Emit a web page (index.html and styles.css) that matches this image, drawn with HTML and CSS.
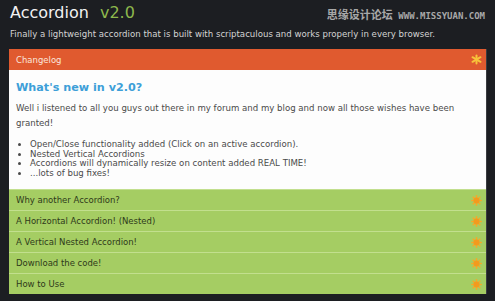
FILE: index.html
```html
<!DOCTYPE html>
<html lang="en">
<head>
  <meta charset="UTF-8" />
  <title>Accordion v2.0</title>
  <link rel="stylesheet" href="styles.css">
</head>
<body>

  <header class="top">
    <div class="title-row">
      <h1>Accordion <span class="version">v2.0</span></h1>
      <div class="watermark">思缘设计论坛 <span class="url">WWW.MISSYUAN.COM</span></div>
    </div>
    <p class="intro">Finally a lightweight accordion that is built with scriptaculous and works properly in every browser.</p>
  </header>

  <div class="accordion">
    <div class="acc-toggle active">
      <span>Changelog</span>
      <svg class="icon" width="11" height="11" viewBox="0 0 11 11">
        <g stroke="#f7c23a" stroke-width="2" stroke-linecap="round">
          <line x1="5.5" y1="1.5" x2="5.5" y2="9.5"/>
          <line x1="1.5" y1="3.2" x2="9.5" y2="7.8"/>
          <line x1="1.5" y1="7.8" x2="9.5" y2="3.2"/>
        </g>
      </svg>
    </div>
    <div class="acc-content">
      <h2>What's new in v2.0?</h2>
      <p>Well i listened to all you guys out there in my forum and my blog and now all those wishes have been granted!</p>
      <ul>
        <li>Open/Close functionality added (Click on an active accordion).</li>
        <li>Nested Vertical Accordions</li>
        <li>Accordions will dynamically resize on content added REAL TIME!</li>
        <li>...lots of bug fixes!</li>
      </ul>
    </div>

    <div class="acc-toggle">
      <span>Why another Accordion?</span>
      <svg class="icon" width="11" height="11" viewBox="0 0 11 11"><use href="#sun"/></svg>
    </div>
    <div class="acc-toggle">
      <span>A Horizontal Accordion! (Nested)</span>
      <svg class="icon" width="11" height="11" viewBox="0 0 11 11"><use href="#sun"/></svg>
    </div>
    <div class="acc-toggle">
      <span>A Vertical Nested Accordion!</span>
      <svg class="icon" width="11" height="11" viewBox="0 0 11 11"><use href="#sun"/></svg>
    </div>
    <div class="acc-toggle">
      <span>Download the code!</span>
      <svg class="icon" width="11" height="11" viewBox="0 0 11 11"><use href="#sun"/></svg>
    </div>
    <div class="acc-toggle">
      <span>How to Use</span>
      <svg class="icon" width="11" height="11" viewBox="0 0 11 11"><use href="#sun"/></svg>
    </div>
  </div>

  <svg width="0" height="0" class="defs">
    <defs>
      <g id="sun">
        <g stroke="#f7a928" stroke-width="1.6" stroke-linecap="round">
          <line x1="5.5" y1="0.8" x2="5.5" y2="10.2"/>
          <line x1="0.8" y1="5.5" x2="10.2" y2="5.5"/>
          <line x1="2.2" y1="2.2" x2="8.8" y2="8.8"/>
          <line x1="2.2" y1="8.8" x2="8.8" y2="2.2"/>
        </g>
        <circle cx="5.5" cy="5.5" r="3" fill="#f39a1e"/>
      </g>
    </defs>
  </svg>

</body>
</html>
```

FILE: styles.css
```css
body {
  margin: 0;
  background: #1c1e22;
  font-family: 'DejaVu Sans', Verdana, sans-serif;
  color: #ddd;
}
.top {
  padding: 2px 10px 0 10px;
}
.title-row {
  display: flex;
  justify-content: space-between;
  align-items: center;
}
h1 {
  margin: 0;
  font-size: 16px;
  font-weight: normal;
  color: #f2f2f2;
  line-height: 22px;
}
.version {
  color: #8db84d;
  margin-left: 6px;
}
.watermark {
  font-family: 'Noto Sans CJK SC', sans-serif;
  font-size: 11px;
  font-weight: bold;
  color: #a8a8a8;
  padding-top: 2px;
}
.url {
  font-family: 'DejaVu Sans Mono', monospace;
  font-size: 9px;
  margin-left: 3px;
}
.intro {
  margin: 3px 0 0 0;
  font-size: 8.6px;
  line-height: 14px;
  color: #d4d4d4;
}
.accordion {
  margin: 8px 8px 0 9px;
  border-right: 1px solid #3a3c40;
}
.acc-toggle {
  display: flex;
  justify-content: space-between;
  align-items: center;
  height: 20px;
  padding: 0 4px 0 7px;
  background: #a5cd63;
  border-top: 1px solid #c2df8e;
  color: #2e3a1a;
  font-size: 8.5px;
}
.acc-toggle.active {
  background: #e05a2f;
  border-top: none;
  height: 21px;
  color: #fbe6dc;
}
.icon {
  display: block;
}
.acc-content {
  background: #fdfdfd;
  padding: 9px 7px 11px 7px;
  color: #4a4a4a;
  font-size: 8.6px;
}
h2 {
  margin: 0;
  font-size: 11.2px;
  color: #3d9fd8;
  line-height: 18px;
}
.acc-content p {
  margin: 4px 0 0 0;
  line-height: 15px;
}
.acc-content ul {
  margin: 9px 0 0 0;
  padding-left: 14px;
  line-height: 9.6px;
}
.defs {
  position: absolute;
}
```
